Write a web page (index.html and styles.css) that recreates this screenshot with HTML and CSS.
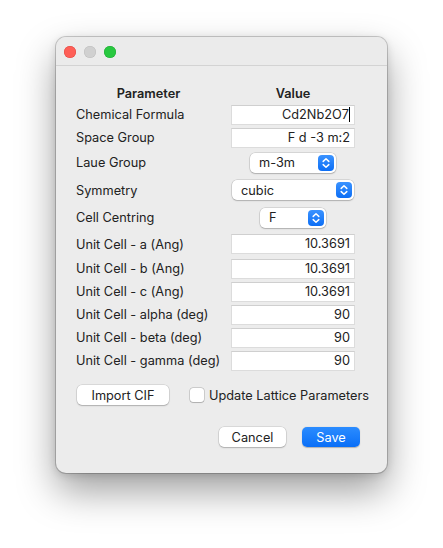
FILE: index.html
```html
<!DOCTYPE html>
<html>
<head>
<meta charset="utf-8">
<link rel="stylesheet" href="styles.css">
</head>
<body>
<div class="window">
  <div class="titlebar">
    <span class="light red"></span>
    <span class="light gray"></span>
    <span class="light green"></span>
  </div>
  <div class="content">
    <div class="row head">
      <div class="label">Parameter</div>
      <div class="value">Value</div>
    </div>
    <div class="row">
      <div class="label">Chemical Formula</div>
      <div class="value"><div class="field"><span class="caret">Cd2Nb2O7</span></div></div>
    </div>
    <div class="row">
      <div class="label">Space Group</div>
      <div class="value"><div class="field">F d -3 m:2</div></div>
    </div>
    <div class="row tall">
      <div class="label">Laue Group</div>
      <div class="value"><div class="popup laue"><span>m-3m</span><span class="stepper"><svg width="16" height="16" viewBox="0 0 16 16"><path d="M5.2 6.4 8 3.8l2.8 2.6M5.2 9.6 8 12.2l2.8-2.6" fill="none" stroke="#fff" stroke-width="1.5" stroke-linecap="round" stroke-linejoin="round"/></svg></span></div></div>
    </div>
    <div class="row tall2">
      <div class="label">Symmetry</div>
      <div class="value"><div class="popup sym"><span>cubic</span><span class="stepper"><svg width="16" height="16" viewBox="0 0 16 16"><path d="M5.2 6.4 8 3.8l2.8 2.6M5.2 9.6 8 12.2l2.8-2.6" fill="none" stroke="#fff" stroke-width="1.5" stroke-linecap="round" stroke-linejoin="round"/></svg></span></div></div>
    </div>
    <div class="row tall">
      <div class="label">Cell Centring</div>
      <div class="value"><div class="popup cent"><span>F</span><span class="stepper"><svg width="16" height="16" viewBox="0 0 16 16"><path d="M5.2 6.4 8 3.8l2.8 2.6M5.2 9.6 8 12.2l2.8-2.6" fill="none" stroke="#fff" stroke-width="1.5" stroke-linecap="round" stroke-linejoin="round"/></svg></span></div></div>
    </div>
    <div class="row first-cell">
      <div class="label">Unit Cell - a (Ang)</div>
      <div class="value"><div class="field">10.3691</div></div>
    </div>
    <div class="row">
      <div class="label">Unit Cell - b (Ang)</div>
      <div class="value"><div class="field">10.3691</div></div>
    </div>
    <div class="row">
      <div class="label">Unit Cell - c (Ang)</div>
      <div class="value"><div class="field">10.3691</div></div>
    </div>
    <div class="row">
      <div class="label">Unit Cell - alpha (deg)</div>
      <div class="value"><div class="field">90</div></div>
    </div>
    <div class="row">
      <div class="label">Unit Cell - beta (deg)</div>
      <div class="value"><div class="field">90</div></div>
    </div>
    <div class="row">
      <div class="label">Unit Cell - gamma (deg)</div>
      <div class="value"><div class="field">90</div></div>
    </div>
    <div class="import-row">
      <div class="btn import">Import CIF</div>
      <label class="check"><span class="box"></span><span>Update Lattice Parameters</span></label>
    </div>
    <div class="actions">
      <div class="btn cancel">Cancel</div>
      <div class="btn primary">Save</div>
    </div>
  </div>
</div>
</body>
</html>
```
FILE: styles.css
```css
* { box-sizing: border-box; }
html, body { margin: 0; padding: 0; background: #ffffff; }
body {
  padding: 37px 0 0 56px;
  font-family: Inter, "Liberation Sans", Arial, sans-serif;
  font-size: 12.75px;
  color: #222222;
  height: 548px;
}
.window {
  width: 331px;
  height: 436px;
  background: #ececec;
  border-radius: 10px;
  box-shadow: 0 0 0 1px rgba(0,0,0,0.18), 0 18px 38px rgba(0,0,0,0.38), 0 2px 8px rgba(0,0,0,0.14);
  overflow: hidden;
}
.titlebar {
  height: 29px;
  border-bottom: 1px solid #d3d3d3;
  background: #ebebeb;
  display: flex;
  align-items: center;
  gap: 8px;
  padding-left: 8px;
  padding-top: 1px;
}
.light {
  width: 12px;
  height: 12px;
  border-radius: 50%;
  display: block;
}
.light.red { background: #fe5f57; box-shadow: inset 0 0 0 0.5px #e1463f; }
.light.gray { background: #d0d0d0; box-shadow: inset 0 0 0 0.5px #bdbdbd; }
.light.green { background: #28c840; box-shadow: inset 0 0 0 0.5px #1ea932; }
.content {
  padding: 18px 32px 0 20px;
}
.row {
  display: grid;
  grid-template-columns: 145px 124px;
  column-gap: 10px;
  height: 23px;
  align-items: center;
  white-space: nowrap;
}
.row.head { height: 19px; font-weight: 600; }
.row.head .label, .row.head .value { text-align: center; }
.row.tall { height: 27px; }
.row.tall2 { height: 28px; }
.row.first-cell { height: 26px; }
.value { display: flex; justify-content: center; }
.field {
  width: 124px;
  height: 20px;
  background: #fff;
  border: 1px solid #dcdcdc;
  border-top-color: #cfcfcf;
  text-align: right;
  padding: 0 4px 0 4px;
  line-height: 18px;
}
.caret { border-right: 1px solid #000; padding-right: 0; }
.popup {
  height: 20px;
  background: #fff;
  border-radius: 5px;
  box-shadow: 0 0 0 0.5px rgba(0,0,0,0.18), 0 1px 1.5px rgba(0,0,0,0.18);
  display: flex;
  align-items: center;
  justify-content: space-between;
  padding: 0 2px 0 9px;
}
.popup.laue { width: 86px; }
.popup.sym { width: 122px; }
.popup.cent { width: 66px; }
.stepper {
  width: 16px;
  height: 16px;
  border-radius: 4px;
  background: linear-gradient(#3b93ff, #0c6ef5);
  display: block;
}
.stepper svg { display: block; }
.import-row {
  display: flex;
  align-items: center;
  margin-top: 13px;
  height: 20px;
  padding-left: 1px;
  white-space: nowrap;
}
.btn {
  height: 20px;
  background: #fff;
  border-radius: 5px;
  box-shadow: 0 0 0 0.5px rgba(0,0,0,0.16), 0 1px 1.5px rgba(0,0,0,0.2);
  display: flex;
  align-items: center;
  justify-content: center;
  flex-shrink: 0;
}
.btn.import { width: 92px; }
.check {
  display: flex;
  align-items: center;
  margin-left: 21px;
  gap: 5px;
  flex-shrink: 0;
}
.box {
  width: 14px;
  height: 14px;
  background: #fff;
  border-radius: 3px;
  box-shadow: 0 0 0 0.5px rgba(0,0,0,0.25), 0 0.5px 1px rgba(0,0,0,0.15);
  display: block;
}
.actions {
  display: flex;
  justify-content: flex-end;
  gap: 16px;
  margin-top: 22px;
  margin-right: -5px;
}
.btn.cancel { width: 67px; }
.btn.primary {
  width: 58px;
  color: #fff;
  background: linear-gradient(#2b8cff, #0a6ff7);
  box-shadow: 0 0.5px 1px rgba(0,0,0,0.25);
}
```
